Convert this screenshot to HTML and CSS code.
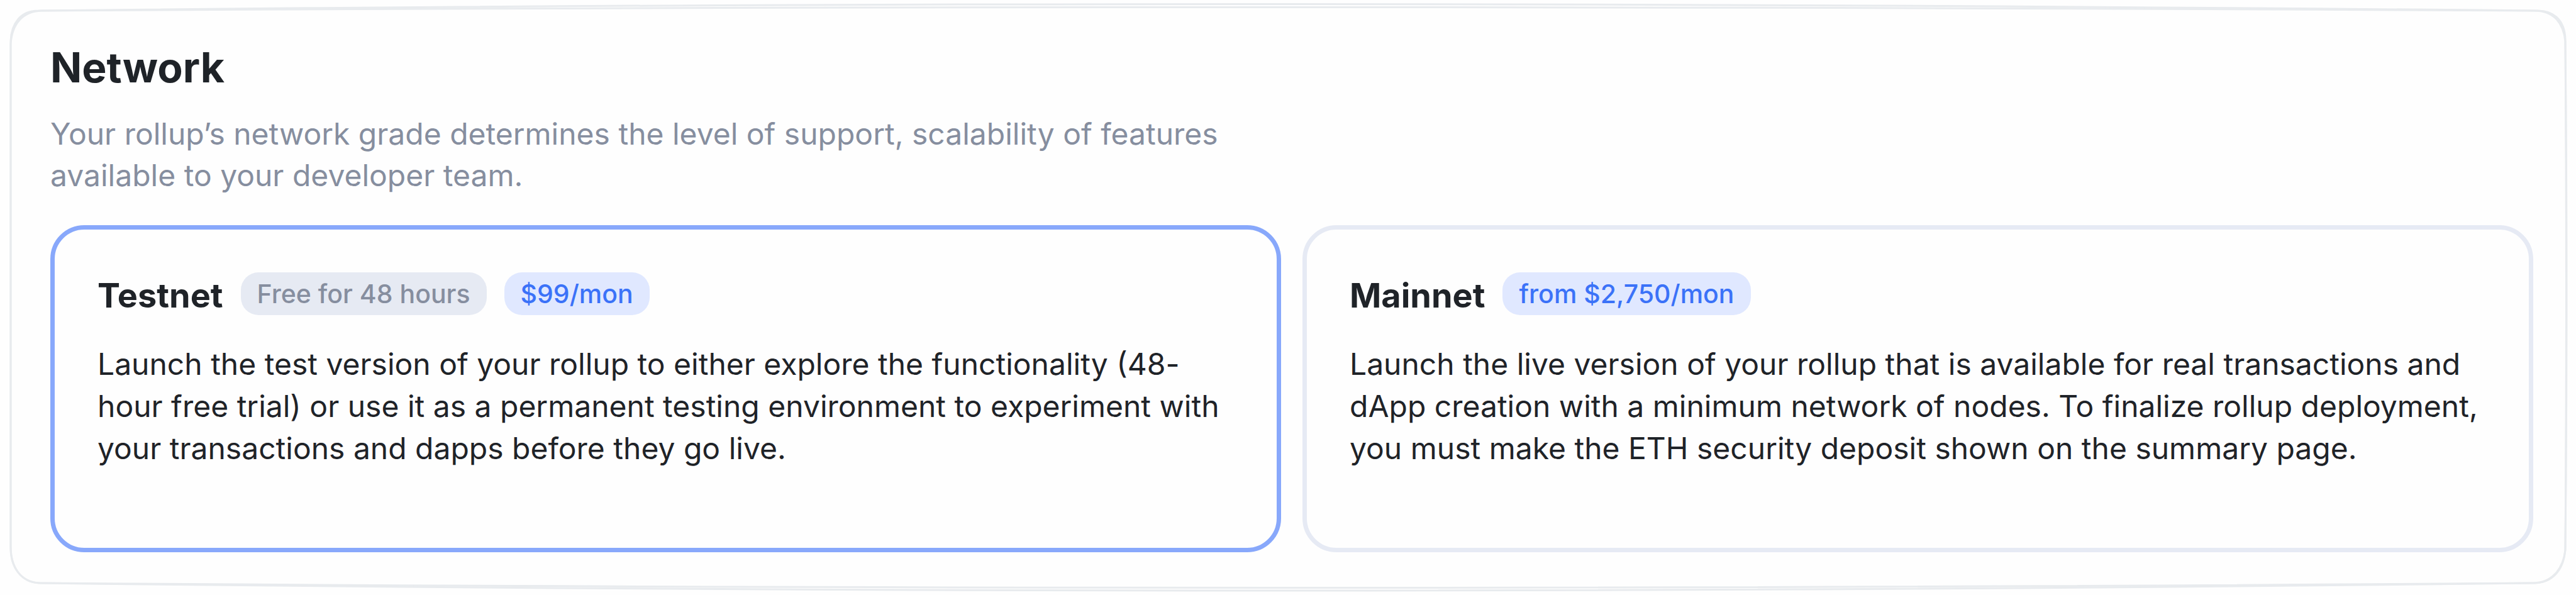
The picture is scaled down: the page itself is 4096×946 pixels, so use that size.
FILE: index.html
```html
<!DOCTYPE html>
<html lang="en">
<head>
<meta charset="utf-8">
<title>Network</title>
<link rel="stylesheet" href="styles.css">
</head>
<body>
<main class="panel">
  <svg class="sketch" viewBox="0 0 4096 946" preserveAspectRatio="none" aria-hidden="true">
    <path d="M61 17Q1950 -4 4033 17C4060 16 4078 32 4079 62Q4083 470 4079 872C4077 908 4057 927 4029 927Q2048 942 67 927C35 927 17 905 17 868Q16 470 17 65C18 38 32 17 61 17"/>
    <path d="M66 17Q1950 6 4030 17C4058 17 4076 34 4079 66Q4082 470 4079 875C4075 906 4057 927 4027 927Q2048 951 62 927C34 926 17 902 17 872Q17 470 17 70C19 38 36 18 66 17"/>
  </svg>
  <header class="intro">
    <h1 class="title">Network</h1>
    <p class="subtitle">Your rollup’s network grade determines the level of support, scalability of features available to your developer team.</p>
  </header>
  <div class="options" role="radiogroup" aria-label="Network">
    <label class="card">
      <input class="card-input" type="radio" name="network" value="testnet" checked>
      <span class="card-head">
        <span class="card-name">Testnet</span>
        <span class="badge badge-muted">Free for 48 hours</span>
        <span class="badge">$99/mon</span>
      </span>
      <span class="card-text">Launch the test version of your rollup to either explore the functionality (48-hour free trial) or use it as a permanent testing environment to experiment with your transactions and dapps before they go live.</span>
    </label>
    <label class="card">
      <input class="card-input" type="radio" name="network" value="mainnet">
      <span class="card-head">
        <span class="card-name">Mainnet</span>
        <span class="badge">from $2,750/mon</span>
      </span>
      <span class="card-text">Launch the live version of your rollup that is available for real transactions and dApp creation with a minimum network of nodes. To finalize rollup deployment, you must make the ETH security deposit shown on the summary page.</span>
    </label>
  </div>
</main>
</body>
</html>
```
FILE: styles.css
```css
* {
  box-sizing: border-box;
}

body {
  margin: 0;
  background: #fefefe;
  color: #1f2328;
  font-family: Inter, "Liberation Sans", sans-serif;
}

.panel {
  position: relative;
  display: flex;
  flex-direction: column;
  min-height: 100vh;
  padding: 65px 68px 68px 80px;
}

.sketch {
  position: absolute;
  inset: 0;
  width: 100%;
  height: 100%;
  fill: none;
  stroke: #e8ebee;
  stroke-width: 3px;
  pointer-events: none;
}

.sketch path {
  vector-effect: non-scaling-stroke;
}

.title {
  margin: 0;
  font-size: 66px;
  font-weight: 700;
  line-height: 84px;
}

.subtitle {
  max-width: 1900px;
  margin: 31px 0 46px;
  color: #868e9f;
  font-size: 48px;
  line-height: 66px;
}

.options {
  display: grid;
  flex: 1;
  grid-template-columns: 1fr 1fr;
  gap: 34px;
}

.card {
  position: relative;
  display: flex;
  flex-direction: column;
  gap: 44px;
  padding: 68px;
  border: 7px solid #e6eaf4;
  border-radius: 54px;
  cursor: pointer;
}

.card:has(.card-input:checked) {
  border-color: #88a8fb;
}

.card-input {
  position: absolute;
  inset: 0;
  margin: 0;
  opacity: 0;
}

.card-head {
  display: flex;
  align-items: center;
  gap: 28px;
}

.card-name {
  padding-top: 6px;
  font-size: 54px;
  font-weight: 700;
  line-height: 62px;
}

.badge {
  padding: 0 26px;
  border-radius: 28px;
  background: #e0e8ff;
  color: #3b72f8;
  font-size: 41px;
  font-weight: 500;
  line-height: 68px;
}

.badge-muted {
  background: #e6eaf3;
  color: #868e9f;
}

.card-text {
  font-size: 48px;
  line-height: 67px;
}
```
